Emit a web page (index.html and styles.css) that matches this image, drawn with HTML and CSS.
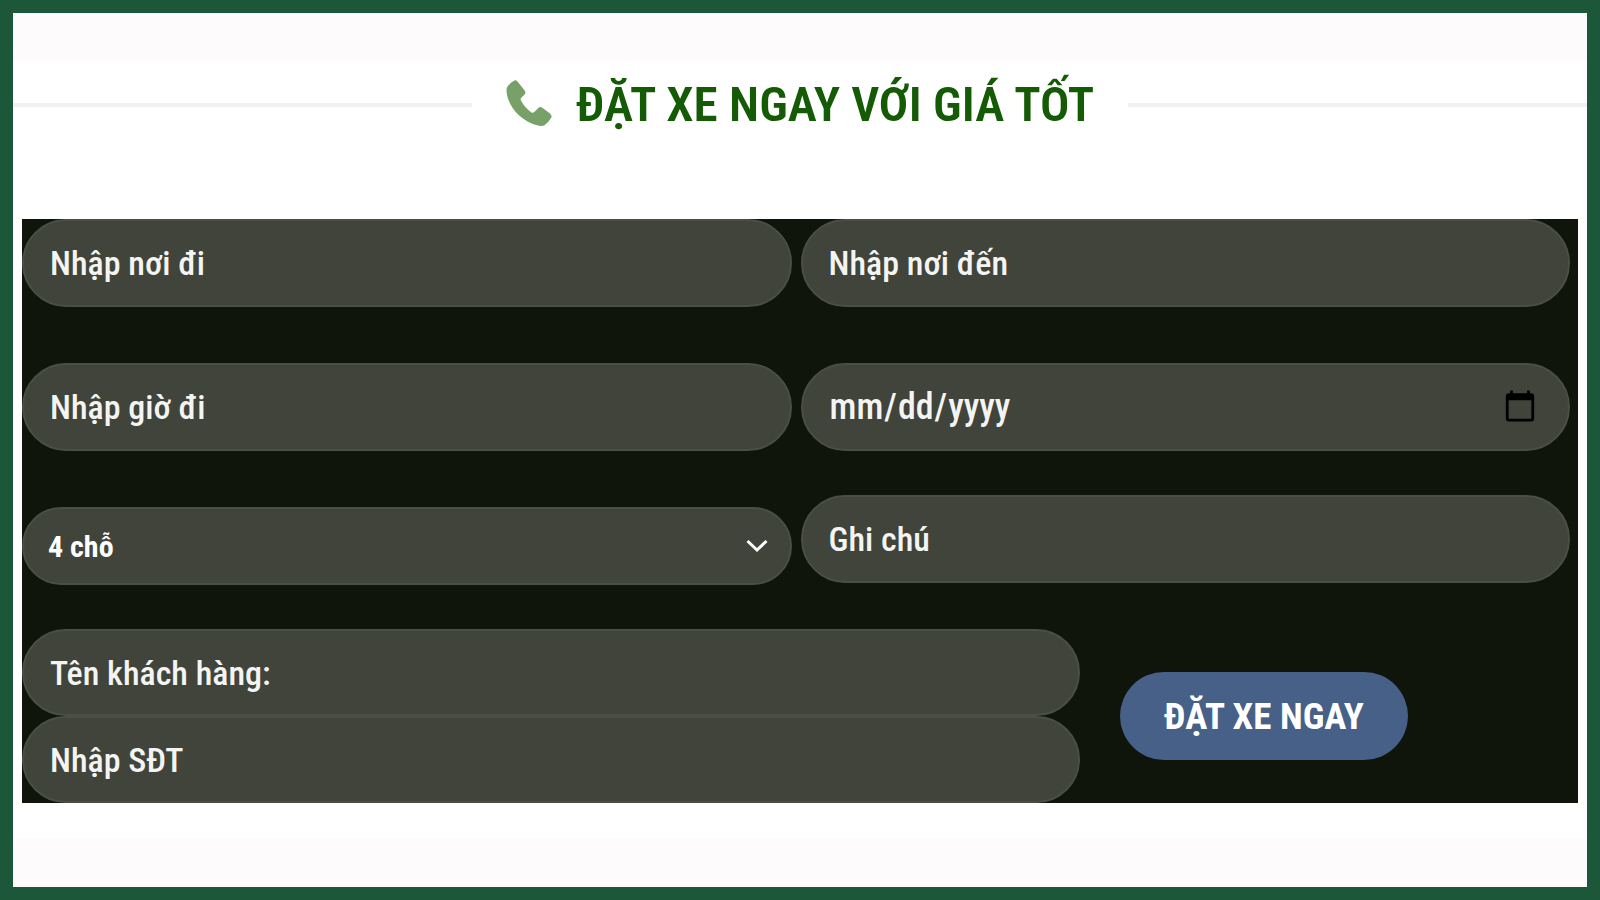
FILE: index.html
```html
<!DOCTYPE html>
<html lang="vi">
<head>
    <meta charset="UTF-8">
    <meta name="viewport" content="width=device-width, initial-scale=1">
    <title>Đặt xe ngay với giá tốt</title>
    <link rel="stylesheet" href="styles.css">
</head>
<body>
    <main class="booking">
        <!-- Section title -->
        <div class="section-title">
            <span class="line"></span>
            <h1>
                <svg class="phone-icon" viewBox="0 0 46 46" aria-hidden="true">
                    <path d="M8 0.700 Q10 -0.300 11.500 1.500 L19 11 Q20 13 18.500 14.500 L15 18 Q14.300 19 15 20.500 Q18.500 27.500 25.500 32.500 Q27 33.300 28.300 32 L32.500 27.800 Q34 26.500 36 27.500 L44 33.500 Q46.300 35.500 45.300 37.500 Q42.500 42.500 38.500 45.300 Q36.500 46.300 33 45.700 C16 42 3 28 0.700 13 Q0.300 9 1 7.500 Q3.500 3 8 0.700 Z" fill="#77a168"/>
                </svg>
                ĐẶT XE NGAY VỚI GIÁ TỐT
            </h1>
            <span class="line"></span>
        </div>

        <!-- Booking form -->
        <form class="booking-form" id="bookingForm">
            <div class="form-grid">
                <input class="field" type="text" name="from" placeholder="Nhập nơi đi" aria-label="Nhập nơi đi">
                <input class="field" type="text" name="to" placeholder="Nhập nơi đến" aria-label="Nhập nơi đến">
                <input class="field" type="text" name="time" placeholder="Nhập giờ đi" aria-label="Nhập giờ đi">
                <input class="field date" type="date" name="date" lang="en-US" aria-label="Ngày đi">
            </div>
            <div class="form-grid options">
                <div class="select-wrap">
                    <select class="field select" name="seats" aria-label="Số chỗ">
                        <option>4 chỗ</option>
                    </select>
                    <svg class="arrow" viewBox="0 0 22 14" aria-hidden="true">
                        <path d="M1.500 2 L11 11 L20.500 2" fill="none" stroke="#fff" stroke-width="3"/>
                    </svg>
                </div>
                <input class="field" type="text" name="note" placeholder="Ghi chú" aria-label="Ghi chú">
            </div>
            <div class="form-bottom">
                <div class="contact">
                    <input class="field" type="text" name="customer" placeholder="Tên khách hàng:" aria-label="Tên khách hàng">
                    <input class="field" type="tel" name="phone" placeholder="Nhập SĐT" aria-label="Nhập SĐT">
                </div>
                <button class="submit-button" type="submit">ĐẶT XE NGAY</button>
            </div>
        </form>
    </main>
</body>
</html>
```

FILE: styles.css
```css
/* Basic Styling */
* {
    box-sizing: border-box;
}

body {
    margin: 0;
    min-height: 100vh;
    padding: 13px;
    display: flex;
    background-color: #1d573a;
    font-family: "Roboto Condensed", "Liberation Sans Narrow", Roboto, sans-serif;
}

.booking {
    flex: 1;
    background-color: #fff;
    border-top: 48px solid #fdfbfc;
    border-bottom: 48px solid #fdfbfc;
}

/* Section title */
.section-title {
    display: flex;
    align-items: center;
    height: 88px;
    margin-bottom: 70px;
}

.line {
    flex: 1;
    height: 4px;
    background-color: #f0f0f0;
}

h1 {
    display: flex;
    align-items: center;
    gap: 24px;
    margin: 0;
    padding: 0 34px;
    font-size: 49px;
    font-weight: 600;
    line-height: 56px;
    color: #155a05;
}

.phone-icon {
    width: 46px;
    height: 46px;
    margin-bottom: 4px;
}

/* Form */
.booking-form {
    margin: 0 9px;
    background-color: #10150b;
}

.form-grid {
    display: grid;
    grid-template-columns: 1fr 1fr;
    gap: 56px 9px;
    padding-right: 8px;
}

.options {
    margin: 44px 0;
}

.field {
    display: block;
    width: 100%;
    height: 88px;
    margin: 0;
    padding: 0 26px;
    border: 2px solid #4a4f46;
    border-radius: 44px;
    background-color: #40443b;
    font-family: inherit;
    font-size: 34px;
    font-weight: 500;
    color: #f4f4f2;
    outline: none;
}

.field::placeholder {
    color: #f4f4f2;
    opacity: 1;
}

.date {
    padding-right: 28px;
    font-size: 36px;
}

.select-wrap {
    position: relative;
    padding-top: 12px;
}

.select {
    height: 78px;
    padding: 0 24px;
    appearance: none;
    font-size: 30px;
    font-weight: 700;
    color: #fff;
}

.arrow {
    position: absolute;
    right: 24px;
    top: 44px;
    width: 22px;
    height: 14px;
    pointer-events: none;
}

/* Contact fields and submit */
.form-bottom {
    display: flex;
    align-items: center;
    gap: 40px;
}

.contact {
    width: 68%;
}

.contact .field {
    height: 87px;
}

.submit-button {
    height: 88px;
    padding: 0 44px;
    border: none;
    border-radius: 44px;
    background-color: #466088;
    font-family: inherit;
    font-size: 37px;
    font-weight: 700;
    color: #fff;
    cursor: pointer;
}
```
